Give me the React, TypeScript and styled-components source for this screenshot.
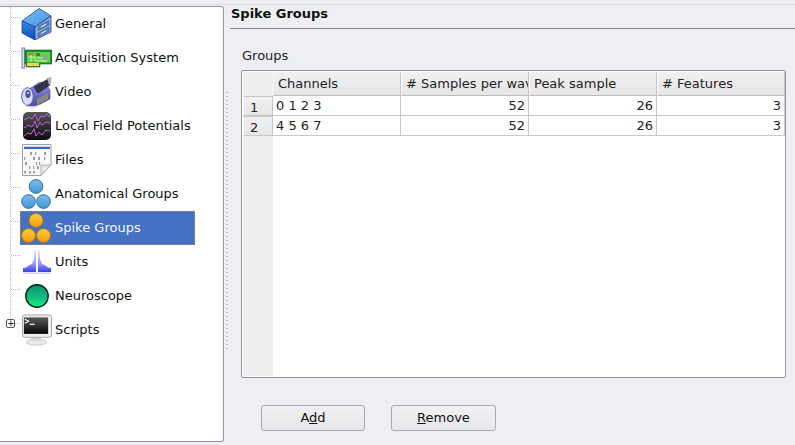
import React from 'react'
import styled, { createGlobalStyle } from 'styled-components'

const GlobalStyle = createGlobalStyle`
  html, body {
    margin: 0;
    padding: 0;
    background: #eeeff3;
    font-family: "DejaVu Sans", sans-serif;
    font-size: 13px;
    color: #111;
  }
`

const GeneralIcon = () => (
  <svg width="32" height="32" viewBox="0 0 32 32">
    <defs>
      <linearGradient id="gTop" x1="0" y1="0" x2="1" y2="1">
        <stop offset="0" stopColor="#7fc0f2" />
        <stop offset="1" stopColor="#3f8fe4" />
      </linearGradient>
      <linearGradient id="gLeft" x1="0" y1="0" x2="0" y2="1">
        <stop offset="0" stopColor="#2f8cf0" />
        <stop offset="1" stopColor="#1546b8" />
      </linearGradient>
      <linearGradient id="gRight" x1="0" y1="0" x2="1" y2="1">
        <stop offset="0" stopColor="#a9c6e6" />
        <stop offset="1" stopColor="#6f95c8" />
      </linearGradient>
    </defs>
    <path d="M2 13 L19 0.5 L31 8 L15 19 Z" fill="url(#gTop)" stroke="#1d3f9c" strokeWidth="0.8" strokeLinejoin="round" />
    <path d="M2 13 L15 19 V32 L2 25 Z" fill="url(#gLeft)" stroke="#1d3f9c" strokeWidth="0.8" strokeLinejoin="round" />
    <path d="M15 19 L31 8 V24 L15 32 Z" fill="url(#gRight)" stroke="#1d3f9c" strokeWidth="0.8" strokeLinejoin="round" />
    <path d="M18 18.5 L28.5 12.5 V17 L18 22.5 Z" fill="#5d86bd" stroke="#2d4f94" strokeWidth="0.6" />
    <path d="M18 25 L28.5 19.5 V23.5 L18 29 Z" fill="#5d86bd" stroke="#2d4f94" strokeWidth="0.6" />
    <path d="M21 19 L26 16.2" stroke="#d5e3f4" strokeWidth="1.1" />
    <path d="M21 25.5 L26 22.8" stroke="#d5e3f4" strokeWidth="1.1" />
  </svg>
)

const AcquisitionIcon = () => (
  <svg width="32" height="32" viewBox="0 0 32 32">
    <rect x="2" y="6" width="2.6" height="20" fill="#dcdcf4" stroke="#6a70b8" strokeWidth="0.9" />
    <path d="M5 8 H32 V22 H20 V25 H6 V22 H5 Z" fill="#17912a" stroke="#0f6a1b" strokeWidth="0.6" />
    <rect x="7" y="10" width="23" height="10.5" fill="#62d24a" />
    <rect x="7" y="21" width="12" height="3" fill="#ecd75a" />
    <rect x="8" y="11" width="5" height="2" fill="#c4685a" />
    <rect x="16" y="11" width="4" height="3" fill="#4a7a5a" />
    <rect x="23" y="13" width="5" height="5" fill="#8ea58c" />
    <path d="M8 15 H15 V19 M11 13 V20 M17 16 H23 M16 19 H27" stroke="#e9f3b0" strokeWidth="0.9" fill="none" />
  </svg>
)

const VideoIcon = () => (
  <svg width="32" height="32" viewBox="0 0 32 32">
    <defs>
      <linearGradient id="vBody" x1="0" y1="0" x2="0" y2="1">
        <stop offset="0" stopColor="#8f8fe6" />
        <stop offset="1" stopColor="#4a49a0" />
      </linearGradient>
    </defs>
    <path d="M9 13 L20 6 L26 8 L30 14 V23 L15 31 L6 30 Z" fill="url(#vBody)" stroke="#3b3a80" strokeWidth="0.5" />
    <path d="M14 11 L28 3 L30 9 L18 17 Z" fill="#35354e" stroke="#1f1f33" strokeWidth="0.6" />
    <path d="M27 2 L31.5 1 L31 7 L29 9 Z" fill="#aeaec4" />
    <ellipse cx="7.5" cy="20.5" rx="5.8" ry="8.8" fill="#dadbf6" stroke="#5a5aa8" />
    <ellipse cx="8" cy="18" rx="2.6" ry="4" fill="#3a50b8" />
    <circle cx="8" cy="17" r="1" fill="#e8ecff" />
    <path d="M17 23 L28 17 V23 L17 29 Z" fill="#8a8a7e" />
    <path d="M3 28 C8 32 14 31.5 20 29" stroke="#e3e3f5" strokeWidth="1.2" fill="none" />
  </svg>
)

const LfpIcon = () => (
  <svg width="32" height="32" viewBox="0 0 32 32">
    <defs>
      <linearGradient id="lBg" x1="0" y1="0" x2="0" y2="1">
        <stop offset="0" stopColor="#555" />
        <stop offset="1" stopColor="#0c0c0c" />
      </linearGradient>
    </defs>
    <rect x="3" y="2" width="28" height="28" rx="5" fill="url(#lBg)" />
    <g stroke="#c65ae8" strokeWidth="1" fill="none">
      <path d="M4 10 L9 7 L12 9 L15 4 L18 11 L21 6 L24 7 L27 4 L30 7" />
      <path d="M4 18 L8 15 L12 17 L15 11 L17 18 L20 12 L22 15 L26 12 L30 13" />
      <path d="M4 26 L8 23 L11 24 L14 19 L16 26 L19 22 L22 25 L26 20 L30 21" />
    </g>
  </svg>
)

const FilesIcon = () => (
  <svg width="32" height="32" viewBox="0 0 32 32">
    <path d="M2.5 0.5 H31 V21 L21 31.5 H2.5 Z" fill="#f8f8f8" stroke="#a2a2a2" />
    <path d="M31 21 H21 V31.5 Z" fill="#e6e6e6" stroke="#a2a2a2" strokeWidth="0.8" />
    <rect x="4" y="2" width="26" height="1" fill="#cfd6e8" />
    <rect x="4" y="3" width="26" height="2" fill="#3a68c8" />
    <g fill="#a0a0a0">
      <rect x="10" y="8" width="2" height="3" /><rect x="15" y="8" width="1.2" height="3" /><rect x="24" y="8" width="2" height="3" />
      <rect x="4" y="13" width="1.2" height="3" /><rect x="13" y="13" width="2" height="3" /><rect x="18" y="13" width="2" height="3" /><rect x="24" y="13" width="1.2" height="3" />
      <rect x="5" y="18" width="2" height="3" /><rect x="16" y="18" width="1.2" height="3" /><rect x="19" y="18" width="1.2" height="3" />
      <rect x="9" y="22" width="1.2" height="3" /><rect x="13" y="22" width="1.2" height="3" /><rect x="17" y="22" width="2" height="3" />
      <rect x="4" y="27" width="2" height="2.5" /><rect x="9" y="27" width="2" height="2.5" /><rect x="13" y="27" width="2" height="2.5" />
    </g>
  </svg>
)

const GroupIcon = ({ id, light, dark, line }: { id: string; light: string; dark: string; line: string }) => (
  <svg width="34" height="32" viewBox="0 0 34 32">
    <defs>
      <linearGradient id={id} x1="0" y1="0" x2="0" y2="1">
        <stop offset="0" stopColor={light} />
        <stop offset="1" stopColor={dark} />
      </linearGradient>
    </defs>
    <circle cx="17" cy="8" r="7.3" fill={`url(#${id})`} stroke={line} />
    <circle cx="9" cy="24" r="7.3" fill={`url(#${id})`} stroke={line} />
    <circle cx="25" cy="24" r="7.3" fill={`url(#${id})`} stroke={line} />
  </svg>
)

const UnitsIcon = () => (
  <svg width="32" height="32" viewBox="0 0 32 32">
    <defs>
      <linearGradient id="uPeak" x1="0" y1="0" x2="0" y2="1">
        <stop offset="0" stopColor="#dfe1fd" />
        <stop offset="0.6" stopColor="#9a9ef8" />
        <stop offset="1" stopColor="#3a40ee" />
      </linearGradient>
    </defs>
    <path d="M3 26 V22 L6 21.5 L9 19 L12 18 L14 13 L14.5 4 H16 V26 Z" fill="url(#uPeak)" />
    <path d="M31 26 V22 L28 21.5 L25 19 L22 18 L20 13 L19.5 4 H18 V26 Z" fill="url(#uPeak)" />
    <path d="M3 26.5 H31 V28 H3 Z" fill="#cdd0fb" />
  </svg>
)

const NeuroscopeIcon = () => (
  <svg width="32" height="32" viewBox="0 0 32 32">
    <defs>
      <linearGradient id="nBall" x1="0" y1="0" x2="0" y2="1">
        <stop offset="0" stopColor="#0a8f6c" />
        <stop offset="0.55" stopColor="#10bd80" />
        <stop offset="1" stopColor="#12f27e" />
      </linearGradient>
    </defs>
    <circle cx="17" cy="16" r="11.2" fill="url(#nBall)" stroke="#06241a" strokeWidth="1.4" />
  </svg>
)

const ScriptsIcon = () => (
  <svg width="33" height="32" viewBox="0 0 33 32">
    <defs>
      <linearGradient id="sScreen" x1="0" y1="0" x2="0" y2="1">
        <stop offset="0" stopColor="#5a5a5a" />
        <stop offset="1" stopColor="#050505" />
      </linearGradient>
    </defs>
    <ellipse cx="17" cy="28.5" rx="10.5" ry="3.2" fill="#e8e8e8" stroke="#b5b5b5" strokeWidth="0.6" />
    <rect x="12" y="23" width="10" height="4" fill="#d4d4d4" />
    <rect x="2.5" y="0.5" width="30" height="23" rx="2.5" fill="#f0f0f0" stroke="#a5a5a5" />
    <rect x="4" y="3" width="25" height="17" fill="url(#sScreen)" />
    <path d="M5 5 L9 7 L5 9" stroke="#fff" strokeWidth="1.1" fill="none" />
    <rect x="10" y="9.5" width="5" height="1.2" fill="#fff" />
  </svg>
)

const navItems = [
  { label: 'General', icon: <GeneralIcon /> },
  { label: 'Acquisition System', icon: <AcquisitionIcon /> },
  { label: 'Video', icon: <VideoIcon /> },
  { label: 'Local Field Potentials', icon: <LfpIcon /> },
  { label: 'Files', icon: <FilesIcon /> },
  { label: 'Anatomical Groups', icon: <GroupIcon id="blueBall" light="#7cc0ea" dark="#3f93d3" line="#2a6ca8" /> },
  { label: 'Spike Groups', icon: <GroupIcon id="goldBall" light="#ffcf3d" dark="#f49d0b" line="#c77b08" />, selected: true },
  { label: 'Units', icon: <UnitsIcon /> },
  { label: 'Neuroscope', icon: <NeuroscopeIcon /> },
  { label: 'Scripts', icon: <ScriptsIcon />, expandable: true },
]

const groups = [
  { id: 1, channels: '0 1 2 3', samples: 52, peak: 26, features: 3 },
  { id: 2, channels: '4 5 6 7', samples: 52, peak: 26, features: 3 },
]

const App = () => (
  <Page>
    <GlobalStyle />
    <TopRule />
    <Main>
      <Sidebar>
        <Tree>
          {navItems.map((item) => (
            <TreeRow key={item.label}>
              <Branch $last={!!item.expandable}>
                {item.expandable && <Expander>+</Expander>}
              </Branch>
              <TreeItem $selected={!!item.selected}>
                <IconSlot>{item.icon}</IconSlot>
                <ItemLabel>{item.label}</ItemLabel>
              </TreeItem>
            </TreeRow>
          ))}
        </Tree>
      </Sidebar>
      <Splitter />
      <Content>
        <Title>Spike Groups</Title>
        <GroupsLabel>Groups</GroupsLabel>
        <TableFrame>
          <Grid>
            <Corner />
            <HeaderCell>Channels</HeaderCell>
            <HeaderCell>
              <Clip># Samples per waveform</Clip>
            </HeaderCell>
            <HeaderCell>Peak sample</HeaderCell>
            <HeaderCell>&#35; Features</HeaderCell>
            {groups.map((g) => (
              <React.Fragment key={g.id}>
                <RowHeader>{g.id}</RowHeader>
                <Cell>{g.channels}</Cell>
                <Cell $num>{g.samples}</Cell>
                <Cell $num>{g.peak}</Cell>
                <Cell $num>{g.features}</Cell>
              </React.Fragment>
            ))}
          </Grid>
          <TableEmpty>
            <EmptyGutter />
          </TableEmpty>
        </TableFrame>
        <Buttons>
          <Button>
            A<u>d</u>d
          </Button>
          <Button>
            <u>R</u>emove
          </Button>
        </Buttons>
      </Content>
    </Main>
  </Page>
)

export default App

const Page = styled.div`
  width: 795px;
  height: 445px;
  overflow: hidden;
  background: #eeeff3;
  display: flex;
  flex-direction: column;
`

const TopRule = styled.div`
  height: 1px;
  margin-top: 4px;
  background: #d9d9dc;
  flex: none;
`

const Main = styled.div`
  display: flex;
  flex: 1;
  min-height: 0;
`

const Sidebar = styled.div`
  width: 224px;
  height: 436px;
  box-sizing: border-box;
  margin-top: 1px;
  background: #fff;
  border: 1px solid #97979b;
  border-left: none;
  border-radius: 0 3px 3px 0;
  flex: none;
`

const Tree = styled.div`
  display: flex;
  flex-direction: column;
`

const TreeRow = styled.div`
  display: flex;
  height: 34px;
`

const Branch = styled.div<{ $last: boolean }>`
  position: relative;
  width: 20px;
  flex: none;

  /* vertical dotted guide */
  &::before {
    content: '';
    position: absolute;
    left: 10px;
    top: 0;
    height: ${(p) => (p.$last ? '7px' : '34px')};
    border-left: 1px dotted #bcbcbc;
  }

  /* horizontal tick */
  &::after {
    content: '';
    position: absolute;
    left: 11px;
    top: 10px;
    width: 9px;
    border-top: 1px dotted #bcbcbc;
  }
`

const Expander = styled.span`
  position: absolute;
  left: 6px;
  top: 6px;
  width: 9px;
  height: 9px;
  box-sizing: border-box;
  border: 1px solid #555;
  border-radius: 2px;
  background: #fff;
  z-index: 1;
  font-size: 9px;
  line-height: 7px;
  text-align: center;
  color: #000;
`

const TreeItem = styled.div<{ $selected: boolean }>`
  display: flex;
  align-items: center;
  width: 175px;
  height: 34px;
  box-sizing: border-box;
  background: ${(p) => (p.$selected ? '#4471c1' : 'transparent')};
  color: ${(p) => (p.$selected ? '#f2f5fb' : '#111')};
  outline: ${(p) => (p.$selected ? '1px dotted rgba(220, 150, 50, 0.7)' : 'none')};
  outline-offset: -1px;
`

const ItemLabel = styled.span`
  line-height: 15px;
  margin-bottom: 2px;
`

const IconSlot = styled.span`
  width: 32px;
  height: 32px;
  margin-right: 3px;
  flex: none;
  display: flex;
`

const Splitter = styled.div`
  width: 6px;
  height: 260px;
  margin-top: 87px;
  flex: none;
  background-image: repeating-linear-gradient(to bottom, #bdbdc1 0 1px, transparent 1px 4px);
  background-size: 2px 100%;
  background-position: 2px 0;
  background-repeat: no-repeat;
`

const Content = styled.div`
  flex: 1;
  min-width: 0;
  display: flex;
  flex-direction: column;
`

const Title = styled.div`
  height: 24px;
  box-sizing: border-box;
  padding: 1px 0 0 1px;
  border-bottom: 1px solid #85858a;
  font-weight: bold;
  font-size: 13px;
  line-height: 15px;
`

const GroupsLabel = styled.div`
  margin: 19px 0 0 12px;
  line-height: 15px;
  height: 15px;
  color: #222;
`

const TableFrame = styled.div`
  margin: 7px 0 0 11px;
  width: 545px;
  height: 308px;
  box-sizing: border-box;
  border: 1px solid #97979b;
  border-radius: 2px;
  padding: 1px;
  background: #fff;
  display: flex;
  flex-direction: column;
`

const Grid = styled.div`
  display: grid;
  grid-template-columns: 30px 128px 128px 128px 128px;
  grid-template-rows: 24px 20px 20px;
  flex: none;
`

const Corner = styled.div`
  background: #eeeeef;
`

const HeaderCell = styled.div`
  box-sizing: border-box;
  padding: 0 0 0 4px;
  background: linear-gradient(#f1f1f2, #e6e6e7);
  border-right: 1px solid #c6c6c8;
  border-bottom: 1px solid #bdbdbf;
  border-left: 1px solid #fafafa;
  line-height: 23px;
  white-space: nowrap;
  overflow: hidden;
  color: #222;
`

const Clip = styled.span`
  display: block;
  overflow: hidden;
`

const RowHeader = styled.div`
  box-sizing: border-box;
  padding-left: 6px;
  background: linear-gradient(#f1f1f2, #e6e6e7);
  border: 1px solid #c6c6c8;
  border-left-color: #fafafa;
  line-height: 21px;
  color: #222;
`

const Cell = styled.div<{ $num?: boolean }>`
  box-sizing: border-box;
  padding: 0 3px;
  border-right: 1px solid #c9c9cb;
  border-bottom: 1px solid #c9c9cb;
  text-align: ${(p) => (p.$num ? 'right' : 'left')};
  line-height: 19px;
  color: #222;
`

const TableEmpty = styled.div`
  flex: 1;
  display: flex;
`

const EmptyGutter = styled.div`
  width: 30px;
  background: #eeeeef;
`

const Buttons = styled.div`
  display: flex;
  gap: 26px;
  margin: 27px 0 0 31px;
`

const Button = styled.div`
  width: 104px;
  height: 26px;
  box-sizing: border-box;
  border: 1px solid #aaaaae;
  border-radius: 3px;
  background: linear-gradient(#f1f1f3, #e7e7ea);
  text-align: center;
  line-height: 24px;
  color: #111;

  & + & {
    width: 105px;
  }
`
